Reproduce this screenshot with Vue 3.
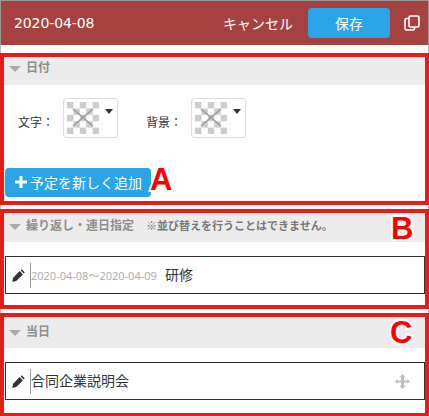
<script setup>
const swatches = [
  { label: '文字：' },
  { label: '背景：' },
]
const cells = []
for (let r = 0; r < 5; r++) {
  for (let c = 0; c < 5; c++) {
    if ((r + c) % 2 === 0) cells.push({ x: c * 6.4, y: r * 6.4 })
  }
}
const pencil = 'M9.700.3l3 3-1 1.100-3-3zM7.600 2.100l3.300 3.300-6.700 6.700-3.900.9.700-4.100z'
</script>

<template>
  <div class="page">
    <header class="topbar">
      <span class="date">2020-04-08</span>
      <span class="cancel">キャンセル</span>
      <button class="save">保存</button>
      <svg class="copy" width="16" height="16" viewBox="0 0 16 16" fill="none" stroke="#fff" stroke-width="1.600">
        <rect x="5" y="1" width="10" height="11" rx="1.500" />
        <path d="M5 3.500H2.500A1.500 1.500 0 0 0 1 5v8.500A1.500 1.500 0 0 0 2.500 15H9a1.500 1.500 0 0 0 1.500-1.500V12" />
      </svg>
    </header>
    <div class="gap first"></div>

    <section class="frame frame-a">
      <div class="head"><i class="tri"></i><b>日付</b></div>
      <div class="colors">
        <div class="color" v-for="s in swatches" :key="s.label">
          <span class="color-label">{{ s.label }}</span>
          <div class="picker">
            <svg class="swatch" width="32" height="32" viewBox="0 0 32 32">
              <rect width="32" height="32" fill="#fff" />
              <rect v-for="(p, i) in cells" :key="i" :x="p.x" :y="p.y" width="6.4" height="6.4" fill="#cdcdcd" />
              <path d="M6 7l20 17M26 7L6 24" stroke="#999" stroke-width="1.500" />
            </svg>
            <i class="caret"></i>
          </div>
        </div>
      </div>
      <button class="add">
        <svg width="12" height="12" viewBox="0 0 12 12"><path d="M4.500 0h3v4.500H12v3H7.500V12h-3V7.500H0v-3h4.500z" fill="#fff" /></svg>
        <span>予定を新しく追加</span>
      </button>
      <span class="mark mark-a">A</span>
    </section>
    <div class="gap"></div>

    <section class="frame frame-b">
      <div class="head"><i class="tri"></i><b>繰り返し・連日指定</b><b class="note">※並び替えを行うことはできません。</b></div>
      <div class="row">
        <svg class="pencil" width="13" height="13" viewBox="0 0 13 13"><path :d="pencil" fill="#333" /></svg>
        <i class="divider"></i>
        <span class="range">2020-04-08～2020-04-09</span>
        <span class="title">研修</span>
      </div>
      <span class="mark mark-b">B</span>
    </section>
    <div class="gap"></div>

    <section class="frame frame-c">
      <div class="head"><i class="tri"></i><b>当日</b></div>
      <div class="row">
        <svg class="pencil" width="13" height="13" viewBox="0 0 13 13"><path :d="pencil" fill="#333" /></svg>
        <i class="divider"></i>
        <span class="title">合同企業説明会</span>
        <svg class="move" width="15" height="15" viewBox="0 0 15 15"><path d="M7.500 0l3 3.200H9v3.300h3.300V5l2.700 2.500-2.700 2.500V8.500H9v3.300h1.500l-3 3.200-3-3.200H6V8.500H2.700V10L0 7.500 2.700 5v1.500H6V3.200H4.500z" fill="#bfbfbf" /></svg>
      </div>
      <span class="mark mark-c">C</span>
    </section>
  </div>
</template>

<style scoped>
.page {
  width: 429px;
  height: 416px;
  overflow: hidden;
  background: #fff;
  font-family: "Noto Sans CJK JP", "Open Sans", sans-serif;
  color: #333;
}

.topbar {
  display: flex;
  align-items: center;
  height: 45px;
  box-sizing: border-box;
  padding-left: 13px;
  background: #a5423f;
  border-top: 1px solid #999;
  border-left: 1px solid #999;
  border-right: 1px solid #999;
  color: #fff;
  font-size: 14px;
}

.date {
  font-family: "DejaVu Sans", sans-serif;
  font-size: 14px;
  letter-spacing: -0.1px;
}

.cancel {
  margin-left: auto;
}

.save {
  width: 82px;
  height: 30px;
  margin: 0 0 0 15px;
  border: 0;
  border-radius: 4px;
  background: #29a5e8;
  color: #fff;
  font: inherit;
}

.copy {
  margin: 0 8px 0 14px;
}

.gap {
  height: 4px;
  border-left: 1px solid #bbb;
  border-right: 1px solid #bbb;
}

.gap.first {
  height: 8px;
}

.frame {
  position: relative;
  box-sizing: border-box;
  border: 4px solid #e81c16;
  background: #fff;
}

.frame-a {
  height: 152px;
}

.frame-b {
  height: 100px;
}

.frame-c {
  height: 104px;
}

.head {
  display: flex;
  align-items: flex-start;
  box-sizing: border-box;
  height: 28px;
  padding: 2px 0 0 5px;
  background: #ececec;
  color: #8f8f8f;
  font-size: 12px;
  line-height: 16px;
}

.frame-b .head {
  height: 29px;
  padding-top: 4px;
}

.frame-c .head {
  height: 31px;
  padding-top: 6px;
}

.tri {
  width: 0;
  height: 0;
  margin: 7px 5px 0 0;
  border-left: 6px solid transparent;
  border-right: 6px solid transparent;
  border-top: 6px solid #aaa;
}

.note {
  margin-left: 12px;
  font-size: 11px;
  color: #777;
}

.colors {
  display: flex;
  padding-top: 13px;
}

.color {
  display: flex;
  align-items: center;
  width: 128px;
  padding-left: 14px;
  box-sizing: border-box;
}

.color-label {
  width: 45px;
  margin-top: 7px;
  font-size: 12px;
  white-space: nowrap;
}

.picker {
  position: relative;
  box-sizing: border-box;
  width: 55px;
  height: 40px;
  border: 1px solid #ddd;
  border-radius: 3px;
  padding: 3px;
}

.swatch {
  display: block;
}

.caret {
  position: absolute;
  top: 10px;
  left: 41px;
  border-left: 4px solid transparent;
  border-right: 4px solid transparent;
  border-top: 5px solid #333;
}

.add {
  display: flex;
  align-items: center;
  gap: 3px;
  width: 146px;
  height: 29px;
  margin: 30px 0 0 1px;
  padding: 0 0 2px 10px;
  border: 0;
  border-radius: 4px;
  background: #29a5e8;
  color: #fff;
  font: inherit;
  font-size: 14px;
}

.row {
  display: flex;
  align-items: center;
  box-sizing: border-box;
  height: 38px;
  margin: 14px 0 0 1px;
  width: 420px;
  border: 1px solid #333;
  padding-left: 6px;
}

.pencil {
  flex: none;
}

.divider {
  align-self: center;
  width: 1px;
  height: 25px;
  margin-left: 5px;
  background: #999;
}

.range {
  width: 134px;
  font-family: "Open Sans", "Noto Sans CJK JP", sans-serif;
  font-size: 11px;
  color: #aaa;
  white-space: nowrap;
}

.title {
  margin-bottom: 3px;
  font-size: 14px;
}

.move {
  margin-left: auto;
  margin-right: 14px;
}

.mark {
  position: absolute;
  color: #f00;
  font-family: "Liberation Sans", sans-serif;
  font-weight: 700;
  font-size: 31px;
  line-height: 1;
  paint-order: stroke fill;
  -webkit-text-stroke: 4px #fff;
}

.mark-a {
  left: 146px;
  top: 107px;
}

.mark-b {
  left: 387px;
  top: 0;
}

.mark-c {
  left: 386px;
  top: 0;
}
</style>
